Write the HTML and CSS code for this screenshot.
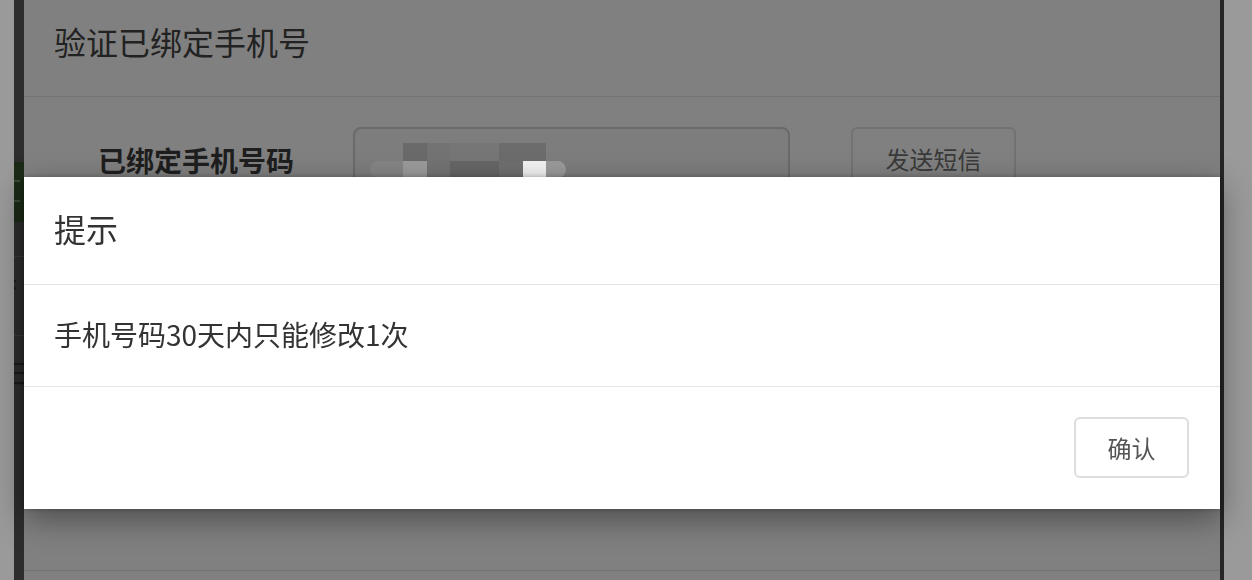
FILE: index.html
```html
<!DOCTYPE html>
<html lang="zh-CN">
<head>
  <meta charset="UTF-8">
  <meta name="viewport" content="width=device-width, initial-scale=1.0">
  <title>验证已绑定手机号</title>
  <link rel="stylesheet" href="styles.css">
</head>
<body>
  <div class="schermo">
    <div class="bordo-sx"></div>
    <div class="striscia">
      <div class="striscia-verde"><span></span></div>
      <div class="striscia-riga r1"></div>
      <div class="striscia-testo">扌</div>
      <div class="striscia-riga r2"></div>
      <div class="striscia-testo t2">三</div>
    </div>

    <div class="modale-verifica">
      <div class="verifica-testa">验证已绑定手机号</div>
      <div class="verifica-corpo">
        <div class="riga-form">
          <label class="etichetta">已绑定手机号码</label>
          <div class="campo">
            <div class="mosaico">
              <i class="vuoto"></i><i class="t1"></i><i class="t2"></i><i class="t3"></i><i class="t4"></i><i class="t4"></i><i class="vuoto"></i>
              <i class="t5"></i><i class="t6"></i><i class="t2"></i><i class="t7"></i><i class="t8"></i><i class="bianco"></i><i class="t9"></i>
            </div>
          </div>
          <button class="btn-sms">发送短信</button>
        </div>
        <div class="riga-form">
          <label class="etichetta"></label>
          <div class="campo"></div>
        </div>
        <div class="riga-form">
          <label class="etichetta"></label>
          <div class="campo"></div>
        </div>
      </div>
      <div class="verifica-piede"></div>
    </div>

    <div class="bordo-linea"></div>
    <div class="bordo-dx"></div>
  </div>

  <div class="avviso">
    <div class="avviso-testa">提示</div>
    <div class="avviso-corpo">手机号码30天内只能修改1次</div>
    <div class="avviso-piede">
      <button class="btn-conferma">确认</button>
    </div>
  </div>
</body>
</html>
```

FILE: styles.css
```css
body {
  margin: 0;
  background-color: #9a9a9a;
  font-family: "Noto Sans CJK SC", "Noto Sans", sans-serif;
  overflow: hidden;
}
.schermo {
  display: flex;
  height: 580px;
}
.bordo-sx {
  width: 14px;
  background-color: #9a9a9a;
}
.striscia {
  width: 10px;
  background-color: #2d2d2d;
  padding-top: 162px;
  box-sizing: border-box;
  overflow: hidden;
}
.striscia-verde {
  height: 60px;
  background-color: #1b2a17;
  padding-top: 18px;
  box-sizing: border-box;
}
.striscia-verde span {
  display: block;
  width: 6px;
  height: 22px;
  border-top: 2px solid #3a4a36;
  border-bottom: 2px solid #3a4a36;
  box-sizing: border-box;
}
.striscia-riga {
  height: 1px;
  background-color: #3a3a3a;
}
.r1 { margin-top: 34px; }
.r2 { margin-top: 32px; }
.striscia-testo {
  font-size: 28px;
  line-height: 32px;
  margin-top: 14px;
  margin-left: -12px;
  width: 40px;
  color: #1a1a1a;
}
.t2.striscia-testo { margin-top: 20px; }

.modale-verifica {
  width: 1196px;
  background-color: #808080;
  display: flex;
  flex-direction: column;
}
.verifica-testa {
  height: 97px;
  box-sizing: border-box;
  padding: 0 0 15px 30px;
  display: flex;
  align-items: center;
  font-size: 32px;
  color: #222;
  border-bottom: 1px solid #737373;
}
.verifica-corpo {
  height: 474px;
  box-sizing: border-box;
  padding: 30px 0 0 74px;
  display: flex;
  flex-direction: column;
  gap: 92px;
  border-bottom: 1px solid #737373;
}
.riga-form {
  display: flex;
  align-items: center;
  height: 66px;
}
.etichetta {
  width: 196px;
  font-size: 28px;
  font-weight: bold;
  color: #1e1e1e;
  text-align: right;
}
.campo {
  width: 437px;
  height: 66px;
  margin-left: 59px;
  box-sizing: border-box;
  border: 2px solid #6a6a6a;
  border-radius: 8px;
  background-color: #7d7d7d;
  padding: 14px 0 0 15px;
}
.mosaico {
  display: grid;
  grid-template-columns: 33px 24px 23px 49px 24px 23px 20px;
  grid-template-rows: 18px 17px;
}
.mosaico i { display: block; }
.mosaico .t1 { background-color: #6a6a6a; }
.mosaico .t2 { background-color: #737373; }
.mosaico .t3 { background-color: #767676; }
.mosaico .t4 { background-color: #6c6c6c; }
.mosaico .t5 { background-color: #858585; border-radius: 10px 0 0 10px; }
.mosaico .t6 { background-color: #9b9b9b; }
.mosaico .t7 { background-color: #666; }
.mosaico .t8 { background-color: #6f6f6f; }
.mosaico .t9 { background-color: #9a9a9a; border-radius: 0 12px 12px 0; }
.mosaico .bianco { background-color: #f2f2f2; }
.btn-sms {
  width: 165px;
  height: 62px;
  margin-left: 61px;
  align-self: flex-start;
  background-color: #808080;
  border: 2px solid #727272;
  border-radius: 6px;
  font-family: inherit;
  font-size: 24px;
  color: #3a3a3a;
}
.verifica-piede {
  flex: 1;
}
.bordo-linea {
  width: 4px;
  background-color: #262626;
}
.bordo-dx {
  flex: 1;
  background-color: #9a9a9a;
}

/* finestra di avviso sopra la modale */
.avviso {
  position: fixed;
  left: 24px;
  top: 177px;
  width: 1196px;
  background-color: #fff;
  color: #333;
  box-shadow: 0 10px 30px rgba(0, 0, 0, 0.4), 0 0 5px rgba(0, 0, 0, 0.25);
}
.avviso-testa {
  height: 108px;
  box-sizing: border-box;
  padding: 0 0 5px 30px;
  display: flex;
  align-items: center;
  font-size: 32px;
  border-bottom: 1px solid #e5e5e5;
}
.avviso-corpo {
  height: 102px;
  box-sizing: border-box;
  padding: 0 0 4px 30px;
  display: flex;
  align-items: center;
  font-size: 28px;
  border-bottom: 1px solid #e5e5e5;
}
.avviso-piede {
  height: 122px;
  box-sizing: border-box;
  padding: 30px 31px 0 0;
  display: flex;
  justify-content: flex-end;
  align-items: flex-start;
}
.btn-conferma {
  width: 115px;
  height: 61px;
  background-color: #fff;
  border: 2px solid #dcdde1;
  border-radius: 6px;
  font-family: inherit;
  font-size: 24px;
  color: #555;
  cursor: pointer;
}
```
